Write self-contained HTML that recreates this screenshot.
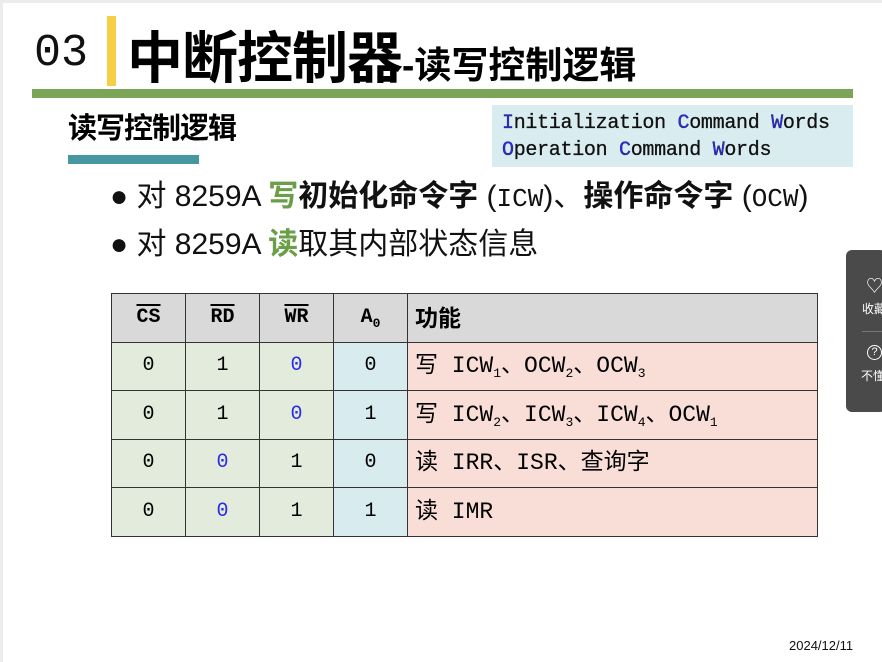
<!DOCTYPE html>
<html><head><meta charset="utf-8"><style>
*{margin:0;padding:0;box-sizing:border-box}
body{width:882px;height:662px;background:#fff;position:relative;overflow:hidden;font-family:"Liberation Sans","Noto Sans CJK SC",sans-serif}
.a{position:absolute}
.mono{font-family:"Liberation Mono","Noto Sans CJK SC",monospace}
table{position:absolute;left:111px;top:293px;border-collapse:collapse}
td{border:1.5px solid #333;height:48.5px;font-size:20px;text-align:center;vertical-align:middle;line-height:24px}
td.f{text-align:left;padding-left:7px;background:#f9ddd7;font-size:23px}
.g{background:#e3ecdc}.b{background:#d8ebef}.h{background:#d9d9d9;font-weight:bold}
.bl{color:#2a2ae8}
sub{font-size:13px;line-height:0;vertical-align:-5px}
.ov{text-decoration:overline}
</style></head><body>
<div class="a" style="left:0;top:0;width:882px;height:3px;background:#ececec"></div>
<div class="a" style="left:0;top:0;width:3px;height:662px;background:#ececec"></div>
<div class="a mono" style="left:34px;top:28px;font-size:45px;color:#111">03</div>
<div class="a" style="left:107px;top:16px;width:9px;height:70px;background:#f6cf45"></div>
<div class="a" style="left:127px;top:14px;font-size:56px;font-weight:bold;color:#000;white-space:nowrap;letter-spacing:-1px">中断控制器<span style="font-size:37px;letter-spacing:0">-读写控制逻辑</span></div>
<div class="a" style="left:32px;top:89px;width:821px;height:9px;background:#7aa557"></div>
<div class="a" style="left:68px;top:105px;font-size:29px;font-weight:bold;letter-spacing:-1px">读写控制逻辑</div>
<div class="a" style="left:68px;top:155px;width:131px;height:9px;background:#4797a0"></div>
<div class="a mono" style="left:492px;top:105px;width:361px;height:62px;background:#d9ecf0;padding:5px 0 0 10px;font-size:20px;line-height:27px;color:#111;white-space:nowrap;letter-spacing:-0.3px;-webkit-text-stroke:0.3px #111"><span class="bl">I</span>nitialization <span class="bl">C</span>ommand <span class="bl">W</span>ords<br><span class="bl">O</span>peration <span class="bl">C</span>ommand <span class="bl">W</span>ords</div>
<div class="a" style="left:110px;top:171px;font-size:30px;white-space:nowrap;color:#111">● 对 8259A <b style="color:#6a9e47">写</b><b>初始化命令字</b> (<span class="mono" style="font-size:26px">ICW</span>)、<b>操作命令字</b> (<span class="mono" style="font-size:26px">OCW</span>)</div>
<div class="a" style="left:110px;top:219px;font-size:30px;white-space:nowrap;color:#111">● 对 8259A <b style="color:#6a9e47">读</b>取其内部状态信息</div>
<table class="mono">
<tr><td class="h" style="width:74px"><span class="ov">CS</span></td><td class="h" style="width:74px"><span class="ov">RD</span></td><td class="h" style="width:74px"><span class="ov">WR</span></td><td class="h" style="width:74px">A<sub>0</sub></td><td class="h f" style="width:410px;background:#d9d9d9;font-family:'Liberation Sans','Noto Sans CJK SC',sans-serif">功能</td></tr>
<tr><td class="g">0</td><td class="g">1</td><td class="g bl">0</td><td class="b">0</td><td class="f">写 ICW<sub>1</sub>、OCW<sub>2</sub>、OCW<sub>3</sub></td></tr>
<tr><td class="g">0</td><td class="g">1</td><td class="g bl">0</td><td class="b">1</td><td class="f">写 ICW<sub>2</sub>、ICW<sub>3</sub>、ICW<sub>4</sub>、OCW<sub>1</sub></td></tr>
<tr><td class="g">0</td><td class="g bl">0</td><td class="g">1</td><td class="b">0</td><td class="f">读 IRR、ISR、查询字</td></tr>
<tr><td class="g">0</td><td class="g bl">0</td><td class="g">1</td><td class="b">1</td><td class="f">读 IMR</td></tr>
</table>
<div class="a" style="left:846px;top:250px;width:40px;height:162px;background:#4a4a4a;border-radius:6px;color:#fff;font-size:12px;overflow:hidden">
<div class="a" style="left:20px;top:22px;font-size:17px">♡</div>
<div class="a" style="left:16px;top:50px;white-space:nowrap">收藏</div>
<div class="a" style="left:16px;top:81px;width:30px;height:1px;background:#777"></div>
<div class="a" style="left:21px;top:95px;width:15px;height:15px;border:1px solid #fff;border-radius:50%;font-size:11px;text-align:center;line-height:13px">?</div>
<div class="a" style="left:15px;top:117px;white-space:nowrap">不懂</div>
</div>
<div class="a" style="left:789px;top:638px;font-size:13px;color:#111">2024/12/11</div>
</body></html>
